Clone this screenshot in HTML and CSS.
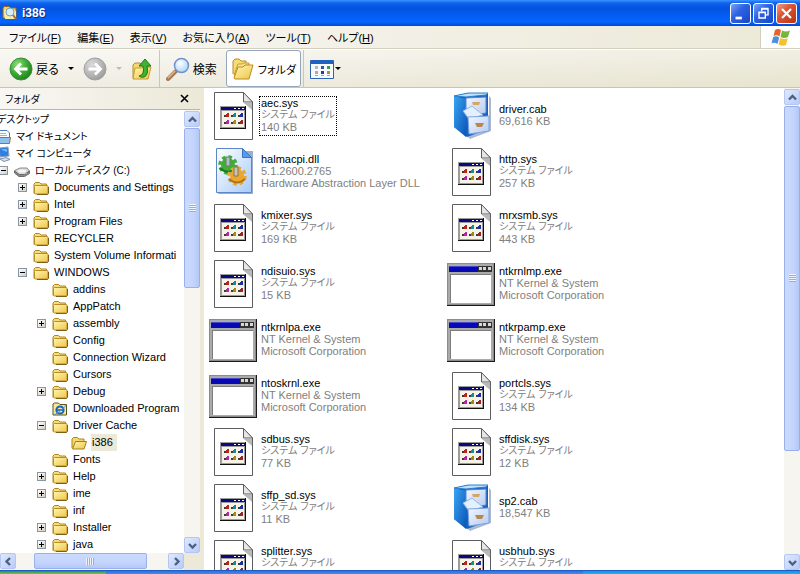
FILE: index.html
```html
<!DOCTYPE html>
<html lang="ja">
<head>
    <meta charset="UTF-8">
    <meta name="viewport" content="width=device-width, initial-scale=1.0">
    <title>i386</title>
    <link rel="stylesheet" href="styles.css">
</head>
<body>
    <svg class="defs" aria-hidden="true">
        <defs>
            <linearGradient id="gFolder" x1="0" y1="0" x2="1" y2="1">
                <stop offset="0" stop-color="#fff7b0"/><stop offset="1" stop-color="#eec44a"/>
            </linearGradient>
            <radialGradient id="gGreen" cx="0.35" cy="0.3" r="0.8">
                <stop offset="0" stop-color="#8fe07c"/><stop offset="0.5" stop-color="#3dad35"/><stop offset="1" stop-color="#1c7a1a"/>
            </radialGradient>
            <radialGradient id="gGray" cx="0.35" cy="0.3" r="0.8">
                <stop offset="0" stop-color="#dadada"/><stop offset="0.6" stop-color="#b4b4b4"/><stop offset="1" stop-color="#969696"/>
            </radialGradient>
            <radialGradient id="gLens" cx="0.4" cy="0.35" r="0.7">
                <stop offset="0" stop-color="#ffffff"/><stop offset="1" stop-color="#a5d3f7"/>
            </radialGradient>
            <linearGradient id="gDll" x1="0" y1="0" x2="1" y2="1">
                <stop offset="0" stop-color="#ffffff"/><stop offset="1" stop-color="#a9cbfa"/>
            </linearGradient>
            <linearGradient id="gCabSide" x1="0" y1="0" x2="1" y2="1">
                <stop offset="0" stop-color="#3aa6f2"/><stop offset="1" stop-color="#0b55b8"/>
            </linearGradient>
            <linearGradient id="gDrawer" x1="0" y1="0" x2="1" y2="1">
                <stop offset="0" stop-color="#f4f8ff"/><stop offset="1" stop-color="#b4caf0"/>
            </linearGradient>
        </defs>
        <symbol id="folder" viewBox="0 0 16 16">
            <path d="M1 13.500V4l1.500-1.500h4L8 4h5.500v2" fill="#f6dc7a" stroke="#b08620"/>
            <path d="M2.500 5.500h11.500q1 0 1 1V13q0 1-1 1H2.500q-1 0-1-1V6.500q0-1 1-1z" fill="url(#gFolder)" stroke="#b98d22"/>
            <path d="M4 14.500h10.500l1-1V7" fill="none" stroke="#7c6018"/>
        </symbol>
        <symbol id="folder-open" viewBox="0 0 16 16">
            <path d="M1 13V4l1.500-1.500h4L8 4h5v3" fill="#f3d770" stroke="#b08620"/>
            <path d="M4.500 6.500h11L13 14H1.500z" fill="url(#gFolder)" stroke="#a77e1a"/>
        </symbol>
        <symbol id="folder-ie" viewBox="0 0 16 16">
            <path d="M1 14V3l1.500-1h4L8 3.500h6.500V14z" fill="#f8e996" stroke="#5b5320"/>
            <circle cx="8" cy="9" r="3.600" fill="none" stroke="#1862c0" stroke-width="2"/>
            <path d="M5 9h7" stroke="#1862c0" stroke-width="1.600"/>
            <path d="M3 13Q1 15 8 10t5-6" fill="none" stroke="#4a94e6"/>
        </symbol>
        <symbol id="documents" viewBox="0 0 16 16">
            <path d="M4 1.500h8L14.500 4v9H3z" fill="#fff" stroke="#4c7db8"/>
            <path d="M5 4.500h6M5 6.500h7" stroke="#8db8e8"/>
            <path d="M1 8.500h14.500l-1 6H1z" fill="#8fc1ef" stroke="#9b762a"/>
        </symbol>
        <symbol id="computer" viewBox="0 0 16 16">
            <path d="M4 2l9-1 1 9-9 1z" fill="#2f7fe0" stroke="#8aa4c4"/>
            <path d="M6 3.500l5.500-.5.500 3z" fill="#7dc0fa"/>
            <path d="M5 13l6-1.500 4 2-6 2z" fill="#d9e0ea" stroke="#7f8fa5"/>
        </symbol>
        <symbol id="disk" viewBox="0 0 16 16">
            <path d="M.5 7.500L6 5h7l2.500 3-5 3.500H5z" fill="#d9d9d9" stroke="#8c8c8c"/>
            <path d="M.5 8v2L5 13.500h5.500l5-3V8l-5 3.500H5z" fill="#8a8a8a" stroke="#6c6c6c"/>
            <ellipse cx="8" cy="8" rx="4" ry="1.500" fill="#f5f5f5"/>
            <rect x="11" y="10" width="2" height="1" fill="#6fdc40"/>
        </symbol>
        <symbol id="sys" viewBox="0 0 48 48">
            <path d="M5.500.5h29l9 9.500v37.500h-38z" fill="#fff" stroke="#5e5e5e"/>
            <path d="M34.500.5v9.500h9z" fill="#e6e6e6" stroke="#5e5e5e"/>
            <path d="M35 11l8 7v-7z" fill="#b9b9b9"/>
            <path d="M11 14h26v23H11z" fill="#111"/>
            <path d="M11 14h25v22H11z" fill="#9c9c9c"/>
            <path d="M12 15h24v3H12z" fill="#0a0a80"/>
            <path d="M25 16h2v1h-2zM29 16h2v1h-2zM33 16h2v1h-2z" fill="#fff"/>
            <path d="M13 19h22v16H13z" fill="#f7f2e6"/>
            <path d="M17 21h3v4h-3z" fill="#b3281e"/><path d="M24 21h3v4h-3z" fill="#178c92"/><path d="M31 21h3v4h-3z" fill="#1d2f9c"/>
            <path d="M17 28h3v4h-3z" fill="#b527a6"/><path d="M24 28h3v4h-3z" fill="#a08a12"/><path d="M31 28h3v4h-3z" fill="#a52020"/>
            <path d="M15 23h2v2h-2zM22 23h2v2h-2zM29 23h2v2h-2zM15 30h2v2h-2zM22 30h2v2h-2zM29 30h2v2h-2z" fill="#3b3b3b"/>
            <path d="M17 21h1v1h-1zM24 21h1v1h-1zM31 21h1v1h-1zM17 28h1v1h-1zM24 28h1v1h-1zM31 28h1v1h-1z" fill="#fff"/>
        </symbol>
        <symbol id="dll" viewBox="0 0 48 48">
            <path d="M9 3h35v43H9z" fill="#5a76a8" opacity=".6"/>
            <path d="M7.500.5h26l9 9v35h-35z" fill="url(#gDll)" stroke="#5b86c8"/>
            <path d="M33.500.5v9h9z" fill="#4f9df0" stroke="#3a72bd"/>
            <circle cx="19" cy="17" r="7" fill="#3fae36"/>
            <circle cx="19" cy="17" r="8" fill="none" stroke="#3fae36" stroke-width="3.500" stroke-dasharray="3.600 2.700"/>
            <path d="M11 20q7 7 15 1" fill="none" stroke="#1d7a1c" stroke-width="2"/>
            <path d="M17 9h4v9h-4z" fill="#b7bcc0" stroke="#6a7c72"/>
            <circle cx="28" cy="28" r="7" fill="#e9a730"/>
            <circle cx="28" cy="28" r="8" fill="none" stroke="#e9a730" stroke-width="3.500" stroke-dasharray="3.600 2.700"/>
            <path d="M20 31q8 7 16 0" fill="none" stroke="#b2731a" stroke-width="2"/>
            <path d="M25 19h4v9h-4z" fill="#c4c4c0" stroke="#8a7550"/>
        </symbol>
        <symbol id="exe" viewBox="0 0 48 48">
            <path d="M0 3h48v43H0z" fill="#1a1a1a"/>
            <path d="M0 3h47v42H0z" fill="#8b8b8b"/>
            <path d="M1 4h45v40H1z" fill="#aaaaaa"/>
            <path d="M2 6h43v6H2z" fill="#0808b4"/>
            <path d="M2 6h43v1H2z" fill="#4848cc"/>
            <path d="M31 6h14v6H31z" fill="#333"/>
            <path d="M32 7h3v3h-3zM36 7h3v3h-3zM41 7h3v3h-3z" fill="#d8d8d8"/>
            <path d="M3 14h41v29H3z" fill="#7d7d7d"/>
            <path d="M4 15h40v28H4z" fill="#fff"/>
        </symbol>
        <symbol id="cab" viewBox="0 0 48 48">
            <path d="M20 44l22-6V4l2 2v33l-21 8z" fill="#5a73a0" opacity=".5"/>
            <path d="M7 4l14-3h20v36l-21 8L7 35z" fill="#1461c4"/>
            <path d="M7 4l12 3v38L7 35z" fill="url(#gCabSide)"/>
            <path d="M7 4l14-3h20l-2 2-20 2z" fill="#bfe0fa" stroke="#2c7fcf"/>
            <path d="M19 6l20-1v16l-20 3z" fill="url(#gDrawer)" stroke="#5686cc"/>
            <path d="M16 19l9-5 11 9-14 4z" fill="#e3f0fe" stroke="#94b5e4"/>
            <path d="M21 25l21-1v15l-20 3z" fill="url(#gDrawer)" stroke="#7aa2de"/>
            <path d="M25 10h8l-1 3h-6z" fill="#d3a568"/>
            <path d="M28 31h9l-2 4h-5z" fill="#b9874c"/>
        </symbol>
    </svg>

    <header class="titlebar">
        <svg class="title-icon" viewBox="0 0 16 16" aria-hidden="true">
            <path d="M1 13V3l1-1.500h5L8.500 3H14v10z" fill="#f3d061" stroke="#8d6a1b"/>
            <path d="M2 5h8l4 1v8H3z" fill="#f9eca6"/>
            <circle cx="8" cy="7" r="4" fill="#d9eefd" stroke="#6da1cc"/>
            <path d="M11 10l3 4" stroke="#a86d36" stroke-width="2"/>
        </svg>
        <h1>i386</h1>
        <div class="window-buttons">
            <button type="button" aria-label="最小化"><svg viewBox="0 0 21 21"><path d="M5 14h7v3H5z" fill="#fff"/></svg></button>
            <button type="button" aria-label="元に戻す"><svg viewBox="0 0 21 21"><path d="M8.500 8V5.500h7v6.500H13M8 5h8" fill="none" stroke="#fff" stroke-width="1.500"/><path d="M5.500 9.500h7v6h-7zM5 9h8" fill="none" stroke="#fff" stroke-width="1.500"/></svg></button>
            <button type="button" class="close" aria-label="閉じる"><svg viewBox="0 0 21 21"><path d="M5.500 5.500l10 10M15.500 5.500l-10 10" stroke="#fff" stroke-width="2.400"/></svg></button>
        </div>
    </header>

    <nav class="menubar">
        <button type="button">ファイル(<u>F</u>)</button>
        <button type="button">編集(<u>E</u>)</button>
        <button type="button">表示(<u>V</u>)</button>
        <button type="button">お気に入り(<u>A</u>)</button>
        <button type="button">ツール(<u>T</u>)</button>
        <button type="button">ヘルプ(<u>H</u>)</button>
        <div class="brand">
            <svg viewBox="0 0 20 18" aria-hidden="true">
                <path d="M4 2q3-2 6 0L8.500 8.500q-3-2-6-.5z" fill="#e8622c"/>
                <path d="M11 2.500q4 2 8 0L17 9q-4 2-7.500 0z" fill="#77b63a"/>
                <path d="M2.200 9q3-1.500 6 .5L6.500 16q-3-2-6-.5z" fill="#4b8fe0"/>
                <path d="M9.200 10q4 2 7.500.3L15 17q-4 1.500-7.500-.5z" fill="#f5c22d"/>
            </svg>
        </div>
    </nav>

    <div class="toolbar">
        <button type="button" class="tool back">
            <svg class="icon-24" viewBox="0 0 24 24" aria-hidden="true"><circle cx="12" cy="12" r="11" fill="url(#gGreen)" stroke="#3c8c38"/><path d="M18.500 12H7M12 6.500L6.500 12l5.500 5.500" fill="none" stroke="#fff" stroke-width="2.800"/></svg>
            戻る
        </button>
        <button type="button" class="drop" aria-label="戻るの履歴"></button>
        <button type="button" class="tool forward" aria-label="進む" disabled>
            <svg class="icon-24" viewBox="0 0 24 24" aria-hidden="true"><circle cx="12" cy="12" r="11" fill="url(#gGray)" stroke="#a0a0a0"/><path d="M5.500 12H17M12 6.500l5.500 5.500-5.500 5.500" fill="none" stroke="#fff" stroke-width="2.800"/></svg>
        </button>
        <button type="button" class="drop" aria-label="進むの履歴" disabled></button>
        <button type="button" class="tool up" aria-label="上へ">
            <svg class="icon-24" viewBox="0 0 24 24" aria-hidden="true"><path d="M2 21V8l2-2h5l2 2h7v5" fill="#f5d96b" stroke="#b78e26"/><path d="M4 11h6l2-1h8l-3 12H2z" fill="url(#gFolder)" stroke="#c59b30"/><path d="M8 19q6-1 4-10H8l6-7 6 7h-4q2 9-3 11-3 1-5-1z" fill="#3db332" stroke="#1c7a1b"/></svg>
        </button>
        <span class="separator"></span>
        <button type="button" class="tool search">
            <svg class="icon-24" viewBox="0 0 24 24" aria-hidden="true"><path d="M10 14l-8 8" stroke="#a77a54" stroke-width="4" stroke-linecap="round"/><path d="M9 14l-7 7" stroke="#e2bb8d" stroke-width="1.500"/><circle cx="15.500" cy="8.500" r="7" fill="url(#gLens)" stroke="#7193c9" stroke-width="1.500"/></svg>
            検索
        </button>
        <button type="button" class="tool folders" aria-pressed="true">
            <svg class="icon-24" viewBox="0 0 24 24" aria-hidden="true"><path d="M2 17V4l2-2h4l2 2h5v5" fill="#f6dc74" stroke="#b98d22"/><path d="M3 18L7 7h4l2-1h5l-2 12z" fill="url(#gFolder)" stroke="#c79c2c"/><path d="M3 21l4-11h5l2-2h8l-4 14H4z" fill="url(#gFolder)" stroke="#b98d22"/></svg>
            フォルダ
        </button>
        <span class="separator"></span>
        <button type="button" class="tool views" aria-label="表示">
            <svg class="icon-24" viewBox="0 0 24 24" aria-hidden="true"><path d="M.5 3.500h23v18H.5z" fill="#f6faff" stroke="#2a62b4"/><path d="M1 3h22v4H1z" fill="#1f61bf"/><path d="M5 9h3v3H5z" fill="#b3b3c4"/><path d="M11 9h3v3h-3z" fill="#3552a2"/><path d="M17 9h3v3h-3z" fill="#3a9a4a"/><path d="M5 14h3v3H5z" fill="#d39a93"/><path d="M11 14h3v3h-3z" fill="#253d96"/><path d="M17 14h3v3h-3z" fill="#b88d30"/><path d="M5 18h3v1H5zM11 18h3v1h-3zM17 18h3v1h-3z" fill="#93a5c4"/></svg>
        </button>
        <button type="button" class="drop" aria-label="表示の種類"></button>
    </div>

    <main class="content">
        <aside class="sidebar">
            <div class="sidebar-head">
                <h2>フォルダ</h2>
                <button type="button" aria-label="閉じる"><svg viewBox="0 0 9 9"><path d="M1 1l7 7M8 1L1 8" stroke="#000" stroke-width="1.600"/></svg></button>
            </div>
            <div class="tree-area">
                <div class="tree-view">
                    <ul class="tree">
                        <li><div class="row jp"><span class="toggle none"></span><svg><use href="#folder"/></svg><span>デスクトップ</span></div>
                            <ul>
                                <li><div class="row jp"><span class="toggle none"></span><svg><use href="#documents"/></svg><span>マイ ドキュメント</span></div></li>
                                <li><div class="row jp"><span class="toggle none"></span><svg><use href="#computer"/></svg><span>マイ コンピュータ</span></div>
                                    <ul>
                                        <li><div class="row jp"><button type="button" class="toggle open" aria-label="折りたたむ"></button><svg><use href="#disk"/></svg><span>ローカル ディスク (C:)</span></div>
                                            <ul>
                                                <li><div class="row"><button type="button" class="toggle" aria-label="展開"></button><svg><use href="#folder"/></svg><span>Documents and Settings</span></div></li>
                                                <li><div class="row"><button type="button" class="toggle" aria-label="展開"></button><svg><use href="#folder"/></svg><span>Intel</span></div></li>
                                                <li><div class="row"><button type="button" class="toggle" aria-label="展開"></button><svg><use href="#folder"/></svg><span>Program Files</span></div></li>
                                                <li><div class="row"><span class="toggle none"></span><svg><use href="#folder"/></svg><span>RECYCLER</span></div></li>
                                                <li><div class="row"><span class="toggle none"></span><svg><use href="#folder"/></svg><span>System Volume Informati</span></div></li>
                                                <li><div class="row"><button type="button" class="toggle open" aria-label="折りたたむ"></button><svg><use href="#folder"/></svg><span>WINDOWS</span></div>
                                                    <ul>
                                                        <li><div class="row"><span class="toggle none"></span><svg><use href="#folder"/></svg><span>addins</span></div></li>
                                                        <li><div class="row"><span class="toggle none"></span><svg><use href="#folder"/></svg><span>AppPatch</span></div></li>
                                                        <li><div class="row"><button type="button" class="toggle" aria-label="展開"></button><svg><use href="#folder"/></svg><span>assembly</span></div></li>
                                                        <li><div class="row"><span class="toggle none"></span><svg><use href="#folder"/></svg><span>Config</span></div></li>
                                                        <li><div class="row"><span class="toggle none"></span><svg><use href="#folder"/></svg><span>Connection Wizard</span></div></li>
                                                        <li><div class="row"><span class="toggle none"></span><svg><use href="#folder"/></svg><span>Cursors</span></div></li>
                                                        <li><div class="row"><button type="button" class="toggle" aria-label="展開"></button><svg><use href="#folder"/></svg><span>Debug</span></div></li>
                                                        <li><div class="row"><span class="toggle none"></span><svg><use href="#folder-ie"/></svg><span>Downloaded Program</span></div></li>
                                                        <li><div class="row"><button type="button" class="toggle open" aria-label="折りたたむ"></button><svg><use href="#folder"/></svg><span>Driver Cache</span></div>
                                                            <ul>
                                                                <li><div class="row selected"><span class="toggle none"></span><svg><use href="#folder-open"/></svg><span>i386</span></div></li>
                                                            </ul>
                                                        </li>
                                                        <li><div class="row"><span class="toggle none"></span><svg><use href="#folder"/></svg><span>Fonts</span></div></li>
                                                        <li><div class="row"><button type="button" class="toggle" aria-label="展開"></button><svg><use href="#folder"/></svg><span>Help</span></div></li>
                                                        <li><div class="row"><button type="button" class="toggle" aria-label="展開"></button><svg><use href="#folder"/></svg><span>ime</span></div></li>
                                                        <li><div class="row"><span class="toggle none"></span><svg><use href="#folder"/></svg><span>inf</span></div></li>
                                                        <li><div class="row"><button type="button" class="toggle" aria-label="展開"></button><svg><use href="#folder"/></svg><span>Installer</span></div></li>
                                                        <li><div class="row"><button type="button" class="toggle" aria-label="展開"></button><svg><use href="#folder"/></svg><span>java</span></div></li>
                                                    </ul>
                                                </li>
                                            </ul>
                                        </li>
                                    </ul>
                                </li>
                            </ul>
                        </li>
                    </ul>
                </div>
                <div class="scrollbar vertical tree-scroll">
                    <button type="button" aria-label="上へスクロール"><svg viewBox="0 0 9 9"><path d="M1 6.500L4.500 3 8 6.500"/></svg></button>
                    <div class="track"><div class="thumb"></div></div>
                    <button type="button" aria-label="下へスクロール"><svg viewBox="0 0 9 9"><path d="M1 3l3.500 3.500L8 3"/></svg></button>
                </div>
                <div class="scrollbar horizontal">
                    <button type="button" aria-label="左へスクロール"><svg viewBox="0 0 9 9"><path d="M6 1L2.500 4.500 6 8"/></svg></button>
                    <div class="track"><div class="thumb"></div></div>
                    <button type="button" aria-label="右へスクロール"><svg viewBox="0 0 9 9"><path d="M3 1l3.500 3.500L3 8"/></svg></button>
                </div>
            </div>
        </aside>

        <section class="files-pane">
            <ul class="files">
                <li><svg><use href="#sys"/></svg><div class="info focused"><b>aec.sys</b><span class="jp">システム ファイル</span><span>140 KB</span></div></li>
                <li><svg><use href="#cab"/></svg><div class="info"><b>driver.cab</b><span>69,616 KB</span></div></li>
                <li><svg><use href="#dll"/></svg><div class="info"><b>halmacpi.dll</b><span>5.1.2600.2765</span><span>Hardware Abstraction Layer DLL</span></div></li>
                <li><svg><use href="#sys"/></svg><div class="info"><b>http.sys</b><span class="jp">システム ファイル</span><span>257 KB</span></div></li>
                <li><svg><use href="#sys"/></svg><div class="info"><b>kmixer.sys</b><span class="jp">システム ファイル</span><span>169 KB</span></div></li>
                <li><svg><use href="#sys"/></svg><div class="info"><b>mrxsmb.sys</b><span class="jp">システム ファイル</span><span>443 KB</span></div></li>
                <li><svg><use href="#sys"/></svg><div class="info"><b>ndisuio.sys</b><span class="jp">システム ファイル</span><span>15 KB</span></div></li>
                <li><svg><use href="#exe"/></svg><div class="info"><b>ntkrnlmp.exe</b><span>NT Kernel &amp; System</span><span>Microsoft Corporation</span></div></li>
                <li><svg><use href="#exe"/></svg><div class="info"><b>ntkrnlpa.exe</b><span>NT Kernel &amp; System</span><span>Microsoft Corporation</span></div></li>
                <li><svg><use href="#exe"/></svg><div class="info"><b>ntkrpamp.exe</b><span>NT Kernel &amp; System</span><span>Microsoft Corporation</span></div></li>
                <li><svg><use href="#exe"/></svg><div class="info"><b>ntoskrnl.exe</b><span>NT Kernel &amp; System</span><span>Microsoft Corporation</span></div></li>
                <li><svg><use href="#sys"/></svg><div class="info"><b>portcls.sys</b><span class="jp">システム ファイル</span><span>134 KB</span></div></li>
                <li><svg><use href="#sys"/></svg><div class="info"><b>sdbus.sys</b><span class="jp">システム ファイル</span><span>77 KB</span></div></li>
                <li><svg><use href="#sys"/></svg><div class="info"><b>sffdisk.sys</b><span class="jp">システム ファイル</span><span>12 KB</span></div></li>
                <li><svg><use href="#sys"/></svg><div class="info"><b>sffp_sd.sys</b><span class="jp">システム ファイル</span><span>11 KB</span></div></li>
                <li><svg><use href="#cab"/></svg><div class="info"><b>sp2.cab</b><span>18,547 KB</span></div></li>
                <li><svg><use href="#sys"/></svg><div class="info"><b>splitter.sys</b><span class="jp">システム ファイル</span><span class="blank"></span></div></li>
                <li><svg><use href="#sys"/></svg><div class="info"><b>usbhub.sys</b><span class="jp">システム ファイル</span><span class="blank"></span></div></li>
            </ul>
            <div class="scrollbar vertical files-scroll">
                <button type="button" aria-label="上へスクロール"><svg viewBox="0 0 9 9"><path d="M1 6.500L4.500 3 8 6.500"/></svg></button>
                <div class="track"><div class="thumb"></div></div>
                <button type="button" aria-label="下へスクロール"><svg viewBox="0 0 9 9"><path d="M1 3l3.500 3.500L8 3"/></svg></button>
            </div>
        </section>
    </main>

    <footer class="taskbar">
        <div class="start"></div>
        <div class="tasks"></div>
        <div class="tray"></div>
    </footer>
</body>
</html>
```

FILE: styles.css
```css
* {
    margin: 0;
    padding: 0;
    box-sizing: border-box;
}
body {
    height: 100vh;
    display: flex;
    flex-direction: column;
    overflow: hidden;
    background-color: #ece9d8;
    color: #000;
    font-family: "Liberation Sans", "Noto Sans CJK JP", sans-serif;
    font-size: 11px;
    font-feature-settings: "palt";
}
button {
    border: none;
    background: none;
    color: inherit;
    font: inherit;
    font-feature-settings: inherit;
}
ul {
    list-style: none;
}
svg {
    display: block;
    flex-shrink: 0;
}
.defs {
    position: absolute;
    width: 0;
    height: 0;
}

/* title bar */
.titlebar {
    display: flex;
    align-items: center;
    height: 26px;
    flex-shrink: 0;
    padding: 0 3px 0 2px;
    gap: 4px;
    background: linear-gradient(#3c94ff 0, #0f63ee 3px, #0453e0 8px, #0460f8 18px, #0366ff 22px, #0247cf 26px);
}
.title-icon {
    width: 16px;
    height: 16px;
}
.titlebar h1 {
    font-size: 12px;
    color: #fff;
    text-shadow: 1px 1px #0a2a80;
}
.window-buttons {
    display: flex;
    gap: 2px;
    margin-left: auto;
}
.window-buttons button {
    width: 21px;
    height: 21px;
    border: 1px solid #fff;
    border-radius: 3px;
    background: linear-gradient(135deg, #7ea4f4, #2f63e4 40%, #1746c4);
}
.window-buttons .close {
    background: linear-gradient(135deg, #f0a08a, #dd5432 40%, #b93412);
}

/* menu */
.menubar {
    display: flex;
    align-items: stretch;
    height: 23px;
    flex-shrink: 0;
    padding-left: 1px;
    border-bottom: 1px solid #d3cfbe;
    background: linear-gradient(90deg, #f8f7f4, #ece9d8);
}
.menubar button {
    padding: 0 8px;
    white-space: nowrap;
}
.brand {
    display: flex;
    align-items: center;
    justify-content: center;
    width: 40px;
    margin-left: auto;
    border-left: 1px solid #d3cfbe;
    background-color: #fff;
}
.brand svg {
    width: 20px;
    height: 18px;
}

/* toolbar */
.toolbar {
    display: flex;
    align-items: center;
    height: 39px;
    flex-shrink: 0;
    padding-left: 9px;
    border-top: 1px solid #fff;
    border-bottom: 1px solid #c9c5b2;
    background: linear-gradient(rgba(255, 255, 255, 0.3), rgba(216, 210, 180, 0.2)), linear-gradient(90deg, #f6f5f0, #ebe8d6);
}
.tool {
    display: flex;
    align-items: center;
    gap: 3px;
    height: 37px;
    font-size: 12px;
    white-space: nowrap;
}
.icon-24 {
    width: 24px;
    height: 24px;
}
.drop {
    width: 24px;
    height: 37px;
    display: flex;
    align-items: center;
    justify-content: center;
}
.drop::before {
    content: '';
    border: 3px solid transparent;
    border-top-color: #000;
    border-bottom: none;
}
.drop:disabled::before {
    border-top-color: #c0bdb0;
}
.views + .drop {
    width: 8px;
}
.separator {
    width: 1px;
    height: 37px;
    margin: 0 6px 0 4px;
    background-color: #cbc7b6;
}
.folders {
    margin-left: 9px;
    padding: 0 4px;
    border: 1px solid #93a6bd;
    border-radius: 3px;
    background-color: #fff;
    font-size: 11px;
}
.folders + .separator {
    margin-left: 2px;
}

/* panes */
.content {
    display: flex;
    flex: 1;
    min-height: 0;
}
.sidebar {
    display: flex;
    flex-direction: column;
    width: 204px;
    flex-shrink: 0;
    padding-right: 4px;
}
.sidebar-head {
    display: flex;
    align-items: center;
    justify-content: space-between;
    height: 22px;
    flex-shrink: 0;
    padding: 0 11px 0 5px;
    border-bottom: 1px solid #b9b6a8;
    background: linear-gradient(90deg, #f8f7f4, #ece9d8);
}
.sidebar-head h2 {
    font-size: 10px;
    font-weight: normal;
}
.sidebar-head svg {
    width: 9px;
    height: 9px;
}
.tree-area {
    display: grid;
    grid-template-columns: 1fr 16px;
    grid-template-rows: 1fr 17px;
    flex: 1;
    min-height: 0;
}
.tree-view {
    padding-top: 1px;
    overflow: hidden;
    background-color: #fff;
}
/* tree is shown scrolled to the right */
.tree {
    margin-left: -39px;
}
.tree ul {
    padding-left: 19px;
}
.row {
    display: flex;
    align-items: center;
    height: 17px;
    line-height: 17px;
    white-space: nowrap;
}
.row svg {
    width: 16px;
    height: 16px;
    margin: 0 4px 0 6px;
}
.row span:last-child {
    padding: 0 1px;
}
.row.jp {
    font-size: 10px;
}
.row.selected span:last-child {
    padding-right: 4px;
    background-color: #ece9d8;
}
.toggle {
    width: 9px;
    height: 9px;
    flex-shrink: 0;
    border: 1px solid #8797a8;
    background: linear-gradient(#000, #000) center / 5px 1px no-repeat, linear-gradient(#000, #000) center / 1px 5px no-repeat, linear-gradient(135deg, #fff, #d3cec2);
}
.toggle.open {
    background: linear-gradient(#000, #000) center / 5px 1px no-repeat, linear-gradient(135deg, #fff, #d3cec2);
}
.toggle.none {
    border: none;
    background: none;
}

/* scrollbars */
.scrollbar {
    display: flex;
    background-color: #f6f5ef;
}
.scrollbar.vertical {
    flex-direction: column;
    width: 16px;
    flex-shrink: 0;
    padding-top: 1px;
}
.scrollbar button {
    display: flex;
    align-items: center;
    justify-content: center;
    width: 16px;
    height: 16px;
    flex-shrink: 0;
    border: 1px solid #b3c6f4;
    border-radius: 2px;
    background: linear-gradient(135deg, #dfe9fe, #b9cbf7);
}
.scrollbar button svg {
    width: 9px;
    height: 9px;
    fill: none;
    stroke: #4d6185;
    stroke-width: 2.4;
}
.track {
    flex: 1;
}
.vertical .track {
    padding-top: 1px;
}
.thumb {
    display: flex;
    align-items: center;
    justify-content: center;
    border: 1px solid #98b0ee;
    border-radius: 2px;
    background: linear-gradient(90deg, #cbdafe, #c4d4fd 60%, #b4c8f6);
}
.thumb::before {
    content: '';
    width: 7px;
    height: 8px;
    background: repeating-linear-gradient(#eef4fe 0 1px, #8cb0f8 1px 2px);
}
.tree-scroll .thumb {
    height: 39%;
}
.files-scroll .thumb {
    height: 77%;
}
.horizontal .thumb {
    width: 74%;
    height: 16px;
    margin-left: 12%;
    background: linear-gradient(#cbdafe, #c4d4fd 60%, #b4c8f6);
}
.horizontal .thumb::before {
    width: 8px;
    height: 7px;
    background: repeating-linear-gradient(90deg, #eef4fe 0 1px, #8cb0f8 1px 2px);
}

/* file list */
.files-pane {
    display: flex;
    flex: 1;
    min-width: 0;
    background-color: #fff;
}
.files {
    display: grid;
    grid-template-columns: repeat(auto-fill, 238px);
    grid-auto-rows: 56px;
    flex: 1;
    padding-left: 5px;
    overflow: hidden;
}
.files li {
    display: flex;
    align-items: center;
    gap: 3px;
}
.files svg {
    width: 48px;
    height: 48px;
}
.info {
    display: flex;
    flex-direction: column;
    padding: 0 1px 2px;
    line-height: 12px;
    color: #808080;
    white-space: nowrap;
}
.info b {
    font-weight: normal;
    color: #000;
}
.info .jp {
    font-size: 10px;
}
.info .blank {
    height: 12px;
}
.info.focused {
    outline: 1px dotted #000;
}

/* taskbar */
.taskbar {
    display: flex;
    height: 4px;
    flex-shrink: 0;
    border-top: 1px solid #1f5cc4;
}
.start {
    width: 106px;
    background: linear-gradient(#388a38, #6fc46a);
}
.tasks {
    flex: 1;
    background: linear-gradient(#2f6fdc, #3f8cf2);
}
.tray {
    width: 217px;
    background: linear-gradient(#1592e0, #19b3f2);
}
```
